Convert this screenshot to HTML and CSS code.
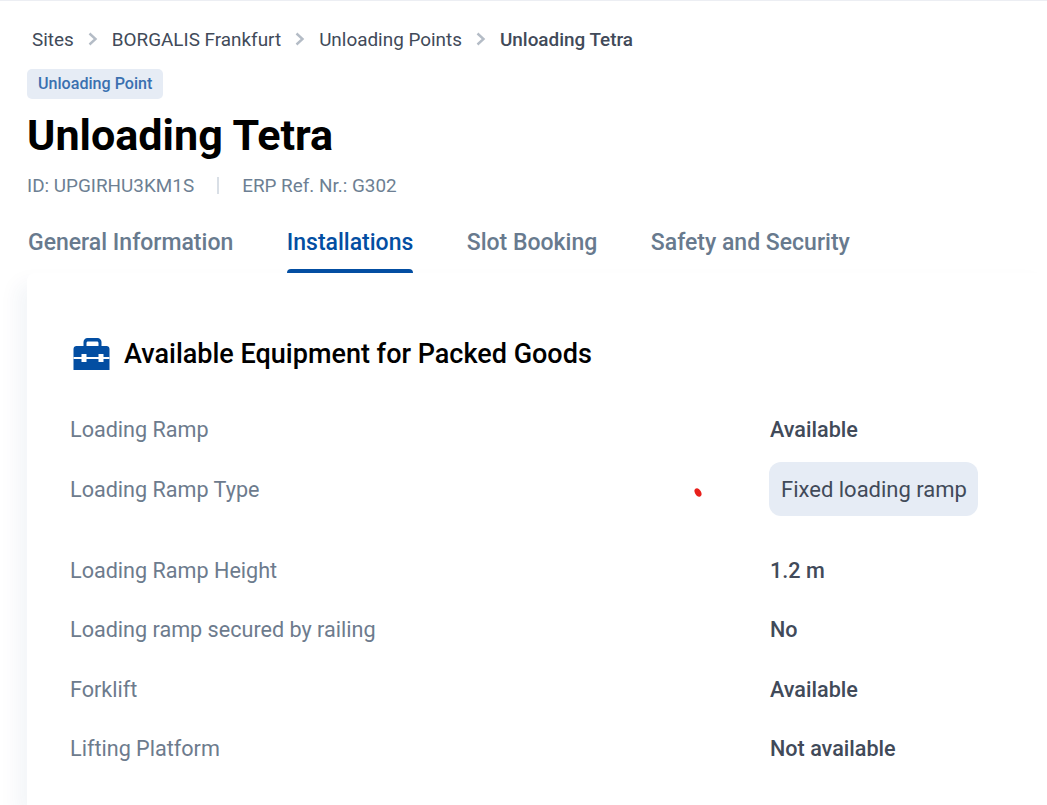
FILE: index.html
```html
<!DOCTYPE html>
<html lang="en">
<head>
    <meta charset="UTF-8">
    <meta name="viewport" content="width=device-width, initial-scale=1.0">
    <title>Unloading Tetra</title>
    <link rel="stylesheet" href="styles.css">
</head>
<body>

<div class="page-header">
    <div class="breadcrumb">
        <a href="#">Sites</a>
        <svg class="crumb-arrow" viewBox="0 0 10 14"><path d="M1.500 1.500L7.500 7l-6 5.500" fill="none" stroke="#b4bcc6" stroke-width="2.400"/></svg>
        <a href="#">BORGALIS Frankfurt</a>
        <svg class="crumb-arrow" viewBox="0 0 10 14"><path d="M1.500 1.500L7.500 7l-6 5.500" fill="none" stroke="#b4bcc6" stroke-width="2.400"/></svg>
        <a href="#">Unloading Points</a>
        <svg class="crumb-arrow" viewBox="0 0 10 14"><path d="M1.500 1.500L7.500 7l-6 5.500" fill="none" stroke="#b4bcc6" stroke-width="2.400"/></svg>
        <span class="current">Unloading Tetra</span>
    </div>
    <span class="type-badge">Unloading Point</span>
    <h1>Unloading Tetra</h1>
    <div class="meta">
        <span>ID: UPGIRHU3KM1S</span>
        <span class="meta-sep"></span>
        <span>ERP Ref. Nr.: G302</span>
    </div>
    <div class="tabs">
        <div class="tab">General Information</div>
        <div class="tab active">Installations</div>
        <div class="tab">Slot Booking</div>
        <div class="tab">Safety and Security</div>
    </div>
</div>

<div class="card">
    <h2>
        <svg class="toolbox" viewBox="0 0 36 32">
            <path fill="#034ea2" d="M10 9V4c0-2.200 1.800-4 4-4h10c2.200 0 4 1.800 4 4v5h-3V5c0-1-.6-1.600-1.600-1.600H14.600C13.600 3.400 13 4 13 5v4z"/>
            <path fill="#034ea2" d="M3 8h30c1.700 0 3 1.300 3 3v21H0V11c0-1.700 1.300-3 3-3z"/>
            <path fill="#ffffff" d="M0 19h8v-3h5v3h12v-3h5v3h6v2h-6v3h-5v-3H13v3H8v-3H0z"/>
        </svg>
        Available Equipment for Packed Goods
    </h2>
    <div class="info-row">
        <span class="label">Loading Ramp</span>
        <span class="value">Available</span>
    </div>
    <div class="info-row tall">
        <span class="label">Loading Ramp Type</span>
        <span class="chip">Fixed loading ramp</span>
    </div>
    <div class="info-row">
        <span class="label">Loading Ramp Height</span>
        <span class="value">1.2 m</span>
    </div>
    <div class="info-row">
        <span class="label">Loading ramp secured by railing</span>
        <span class="value">No</span>
    </div>
    <div class="info-row">
        <span class="label">Forklift</span>
        <span class="value">Available</span>
    </div>
    <div class="info-row">
        <span class="label">Lifting Platform</span>
        <span class="value">Not available</span>
    </div>
</div>

<div class="red-mark"></div>

</body>
</html>
```

FILE: styles.css
```css
html, body {
    height: 100%;
    overflow: hidden;
}
body {
    font-family: Roboto, sans-serif;
    margin: 0;
    background-color: #ffffff;
    border-top: 1px solid #eceef3;
    box-sizing: border-box;
}
.page-header {
    padding: 0 27px;
}
.breadcrumb {
    display: flex;
    align-items: center;
    height: 20px;
    margin: 28px 0 0 5px;
    font-size: 18.900px;
    color: #414a59;
}
.breadcrumb a {
    color: inherit;
    text-decoration: none;
}
.crumb-arrow {
    width: 10px;
    height: 14px;
    margin: 0 14px;
}
.current {
    font-weight: 500;
}
.type-badge {
    display: inline-block;
    margin-top: 20px;
    padding: 0 11px;
    height: 30px;
    line-height: 30px;
    font-size: 16.100px;
    font-weight: 500;
    color: #3a70b0;
    background-color: #e6ecf5;
    border-radius: 5px;
}
h1 {
    margin: 8px 0 0;
    font-size: 43.100px;
    line-height: 58px;
    font-weight: 700;
    color: #000000;
}
.meta {
    display: flex;
    align-items: center;
    height: 22px;
    margin-top: 9px;
    font-size: 18.900px;
    color: #6d7f93;
}
.meta-sep {
    width: 2px;
    height: 17px;
    margin: 0 23px;
    background-color: #d9dfe6;
}
.tabs {
    display: flex;
    gap: 53.500px;
    margin-top: 31px;
    padding-left: 1px;
}
.tab {
    height: 46px;
    font-size: 23px;
    font-weight: 500;
    line-height: 32px;
    color: #687a8e;
}
.tab.active {
    color: #034ea2;
    position: relative;
}
.tab.active::after {
    content: "";
    position: absolute;
    left: 0;
    right: 0;
    bottom: 0;
    height: 4px;
    background-color: #034ea2;
    border-radius: 4px 4px 0 0;
}
.card {
    margin: 0 0 0 27px;
    padding: 63px 69px 0 43px;
    height: 470px;
    border-radius: 8px 0 0 0;
    background-color: #ffffff;
    box-shadow: -10px 10px 20px rgba(20, 60, 120, 0.05);
}
h2 {
    display: flex;
    align-items: center;
    gap: 14px;
    margin: 0 0 28px 3px;
    font-size: 27px;
    line-height: 36px;
    font-weight: 500;
    color: #000000;
}
.toolbox {
    width: 37px;
    height: 32px;
}
.info-row {
    display: grid;
    grid-template-columns: 700px auto;
    justify-content: start;
    align-items: center;
    height: 59.500px;
    font-size: 21.600px;
}
.info-row.tall {
    height: 60px;
    margin-bottom: 21px;
}
.label {
    color: #6d7b8d;
}
.value {
    font-weight: 500;
    color: #414a59;
}
.chip {
    justify-self: start;
    margin: -1px 0 0 -1px;
    padding: 0 11px 0 12px;
    height: 54px;
    line-height: 56px;
    font-size: 22px;
    white-space: nowrap;
    color: #414a59;
    background-color: #e6ecf5;
    border-radius: 12px;
}
.red-mark {
    position: absolute;
    left: 695px;
    top: 488px;
    width: 6px;
    height: 9px;
    background-color: #e8201c;
    border-radius: 50%;
    transform: rotate(-30deg);
}
```
